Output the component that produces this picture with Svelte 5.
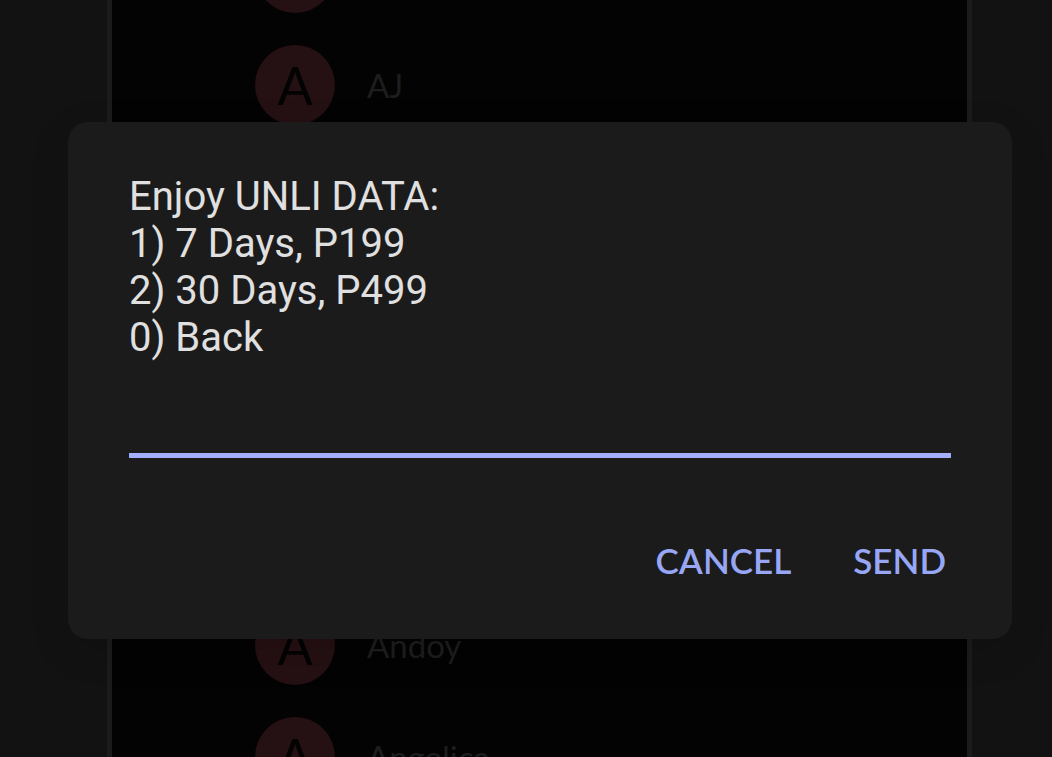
<script lang="ts">
    type Contact = {
        row: number,
        initial: string,
        name: string
    }

    const contacts: Contact[] = [
        { row: 1, initial: '', name: '' },
        { row: 2, initial: 'A', name: 'AJ' },
        { row: 7, initial: 'A', name: 'Andoy' },
        { row: 8, initial: 'A', name: 'Angelica' }
    ]

    const lines = [
        'Enjoy UNLI DATA:',
        '1) 7 Days, P199',
        '2) 30 Days, P499',
        '0) Back'
    ]

    let reply = $state('')
    let open = $state(true)

    function close() {
        open = false
    }

    function send(event: SubmitEvent) {
        event.preventDefault()
        close()
    }
</script>

<style>
    :global(body) {
        background-color: #121212;
    }

    .screen {
        display: grid;
        height: 100vh;
        overflow: hidden;
    }

    .panel, .overlay {
        grid-area: 1 / 1;
        min-height: 0;
    }

    .panel {
        margin: 0 80px 0 107px;
        border: solid #1b1b1b;
        border-width: 0 5px;
        background-color: #030303;
        overflow: hidden;
    }

    .contacts {
        display: grid;
        grid-auto-rows: 112px;
        margin: -83px 0 0;
        padding: 0 0 0 143px;
        list-style: none;
    }

    .contact {
        display: flex;
        align-items: center;
        gap: 32px;
        font: 33px/40px Lato, sans-serif;
        color: #1d1d1d;
    }

    .avatar {
        display: flex;
        align-items: center;
        justify-content: center;
        width: 80px;
        height: 80px;
        border-radius: 50%;
        background-color: #251013;
        color: #030303;
        font-size: 52px;
    }

    .overlay {
        display: flex;
        align-items: center;
        padding: 4px 40px 0 68px;
    }

    .dialog {
        position: relative;
        flex: 1;
        padding: 51px 61px 45px;
        border-radius: 20px;
        background-color: #1b1b1b;
        box-shadow: 0 12px 40px rgba(0, 0, 0, 0.12);
    }

    .message {
        display: block;
        font: 40px/47px Roboto, sans-serif;
        color: #e0e0e0;
    }

    .message span {
        display: block;
    }

    .reply {
        display: block;
        box-sizing: border-box;
        width: 100%;
        height: 67px;
        margin-top: 30px;
        padding: 0;
        border: none;
        border-bottom: 5px solid #a3aefa;
        border-radius: 0;
        outline: none;
        background: none;
        font: 40px/47px Roboto, sans-serif;
        color: #e0e0e0;
    }

    .actions {
        display: flex;
        justify-content: flex-end;
        gap: 52px;
        margin-top: 69px;
    }

    .action {
        padding: 12px 5px;
        border: none;
        background: none;
        font: 600 35px/43px Lato, sans-serif;
        color: #98a7f5;
        cursor: pointer;
    }
</style>

<div class="screen">
    <main class="panel">
        <ul class="contacts">
            {#each contacts as contact}
                <li class="contact" style="grid-row: {contact.row};">
                    <span class="avatar">{contact.initial}</span>
                    <span>{contact.name}</span>
                </li>
            {/each}
        </ul>
    </main>
    {#if open}
        <div class="overlay">
            <form class="dialog" onsubmit={send}>
                <label class="message" for="reply">
                    {#each lines as line}
                        <span>{line}</span>
                    {/each}
                </label>
                <input class="reply" id="reply" type="text" autocomplete="off" bind:value={reply} />
                <div class="actions">
                    <button type="button" class="action" onclick={close}>CANCEL</button>
                    <button type="submit" class="action">SEND</button>
                </div>
            </form>
        </div>
    {/if}
</div>
